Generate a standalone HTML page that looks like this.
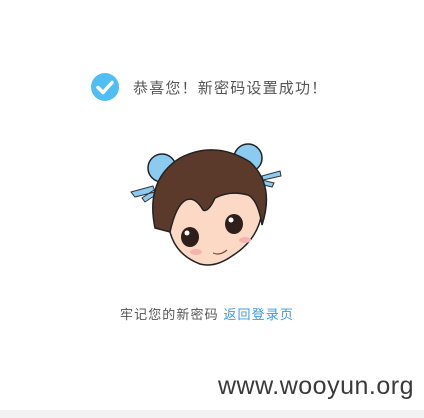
<!DOCTYPE html><html><head><meta charset="utf-8"><style>
body{margin:0;width:424px;height:418px;background:#fff;position:relative;overflow:hidden;font-family:"Liberation Sans","Noto Sans CJK SC",sans-serif}
.t{position:absolute;left:133px;top:77px;font-size:15px;color:#555;letter-spacing:1.2px}
.s{position:absolute;left:120px;top:304px;font-size:13px;color:#555;letter-spacing:1.1px}
.s a{color:#3a9be8;text-decoration:none}
.w{position:absolute;left:218px;top:372px;font-size:25px;color:#3a3a3a;letter-spacing:0.5px}
.b{position:absolute;left:0;top:410px;width:424px;height:8px;background:#f3f3f3}
</style></head><body>
<svg style="position:absolute;left:91px;top:73px" width="28" height="28" viewBox="0 0 28 28"><circle cx="14" cy="14" r="14" fill="#4fbef5"/><path d="M7 14.5l5 5 9-10" stroke="#fff" stroke-width="3.5" fill="none" stroke-linecap="round" stroke-linejoin="round"/></svg>
<div class="t">恭喜您！新密码设置成功！</div>
<svg style="position:absolute;left:128px;top:138px" width="156" height="135" viewBox="128 138 156 135">
<circle cx="162" cy="168" r="14" fill="#8ccbf0" stroke="#222" stroke-width="1.5"/>
<circle cx="248" cy="158" r="14" fill="#8ccbf0" stroke="#222" stroke-width="1.5"/>
<path d="M131 192l22-6 2 6-20 5zM142 198l12-8 3 4-12 8z" fill="#8ccbf0" stroke="#333" stroke-width="1"/>
<path d="M262 176l18-5 1 5-18 4zM262 180l12 3-2 4-12-3z" fill="#8ccbf0" stroke="#333" stroke-width="1"/>
<path d="M168 215 Q168 252 200 264 Q215 268 232 256 Q258 240 262 212 L262 190 L172 195 Z" fill="#fbd9c5" stroke="#222" stroke-width="1.5"/>
<path d="M155 228 Q145 180 180 158 Q215 140 250 162 Q275 185 262 225 Q258 200 248 195 Q230 190 215 198 Q208 213 203 210 Q195 196 186 200 Q176 205 170 232 Z" fill="#5b3a2c" stroke="#222" stroke-width="1.5"/>
<ellipse cx="190" cy="237" rx="9" ry="10" fill="#2e1f1a"/><circle cx="187" cy="233" r="2.5" fill="#fff"/>
<ellipse cx="234" cy="224" rx="9" ry="10" fill="#2e1f1a"/><circle cx="231" cy="220" r="2.5" fill="#fff"/>
<ellipse cx="196" cy="252" rx="6" ry="3" fill="#f6b3b3"/><ellipse cx="245" cy="240" rx="6" ry="3" fill="#f6b3b3"/>
<path d="M213 253 Q220 256 227 250" stroke="#7a4a3a" stroke-width="1.2" fill="none"/>
</svg>
<div class="s">牢记您的新密码 <a>返回登录页</a></div>
<div class="w">www.wooyun.org</div>
<div class="b"></div>
</body></html>
